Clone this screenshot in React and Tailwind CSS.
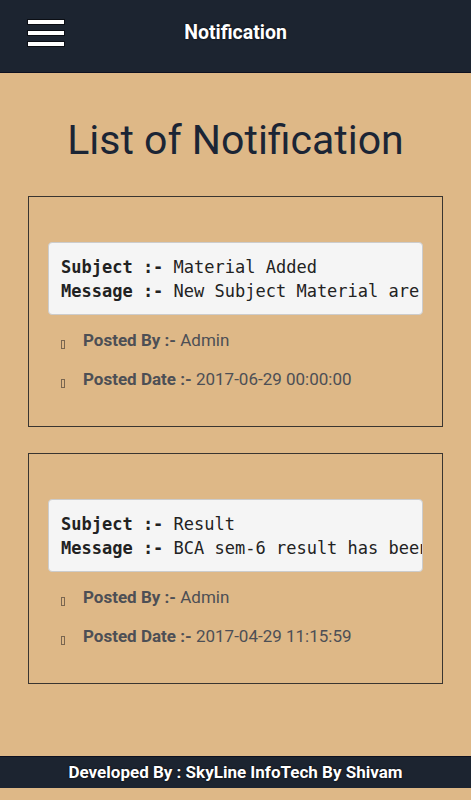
import React from 'react';

const notifications = [
  {
    subject: 'Material Added',
    message: 'New Subject Material are added by Admin, please check it',
    by: 'Admin',
    date: '2017-06-29 00:00:00',
  },
  {
    subject: 'Result',
    message: 'BCA sem-6 result has been declared, check your result now',
    by: 'Admin',
    date: '2017-04-29 11:15:59',
  },
];

const Tofu = () => (
  <span className="inline-block w-[4px] h-[9px] border border-[#7a6650] mr-[18px] translate-y-[3px]" />
);

const NotificationCard = ({ item }) => (
  <div className="border border-[#3a3530] pt-[45px] pb-[35px] pl-[19px] pr-[19px]">
    <pre
      className="bg-[#f5f5f5] border border-[#ccc] rounded-[4px] px-[12px] pt-[12px] pb-[11px] overflow-hidden whitespace-pre text-[17px] leading-[24px] text-[#222]"
      style={{ fontFamily: '"DejaVu Sans Mono", monospace' }}
    >
      <b>Subject :- </b>{item.subject}{'\n'}<b>Message :- </b>{item.message}
    </pre>
    <div className="pl-[13px] mt-[13px] text-[17px] text-[#4d4f55]">
      <p className="h-[24px] leading-[24px]">
        <Tofu />
        <b className="font-bold">Posted By :-</b> {item.by}
      </p>
      <p className="h-[24px] leading-[24px] mt-[15px]">
        <Tofu />
        <b className="font-bold">Posted Date :-</b> {item.date}
      </p>
    </div>
  </div>
);

const App = () => {
  return (
    <div className="min-h-screen bg-[#deb887]" style={{ fontFamily: 'Roboto, "Liberation Sans", sans-serif' }}>
      {/* Top bar */}
      <div className="h-[73px] bg-[#1c2430] border-b border-[#0d1020] relative flex items-center justify-center">
        <div className="absolute left-[27px] top-[19px] flex flex-col gap-[5px]">
          <span className="block w-[38px] h-[6px] bg-white border border-[#0b0e14]" />
          <span className="block w-[38px] h-[6px] bg-white border border-[#0b0e14]" />
          <span className="block w-[38px] h-[6px] bg-white border border-[#0b0e14]" />
        </div>
        <h2 className="text-white font-bold text-[19.5px] -mt-[6px] [text-shadow:0_0_2px_#000]">Notification</h2>
      </div>

      <h1 className="text-center text-[41px] text-[#1b2535] mt-[43px] mb-[32px] leading-[48px]">List of Notification</h1>

      <div className="px-[28px] flex flex-col gap-[26px]">
        {notifications.map((n, i) => (
          <NotificationCard key={i} item={n} />
        ))}
      </div>

      {/* Footer */}
      <div className="mt-[72px] h-[32px] bg-[#1c2430] border-t border-[#0d1020] flex items-center justify-center">
        <p className="text-white font-bold text-[17px] [text-shadow:0_0_2px_#000]">
          Developed By : SkyLine InfoTech By Shivam
        </p>
      </div>
    </div>
  );
};

export default App;
